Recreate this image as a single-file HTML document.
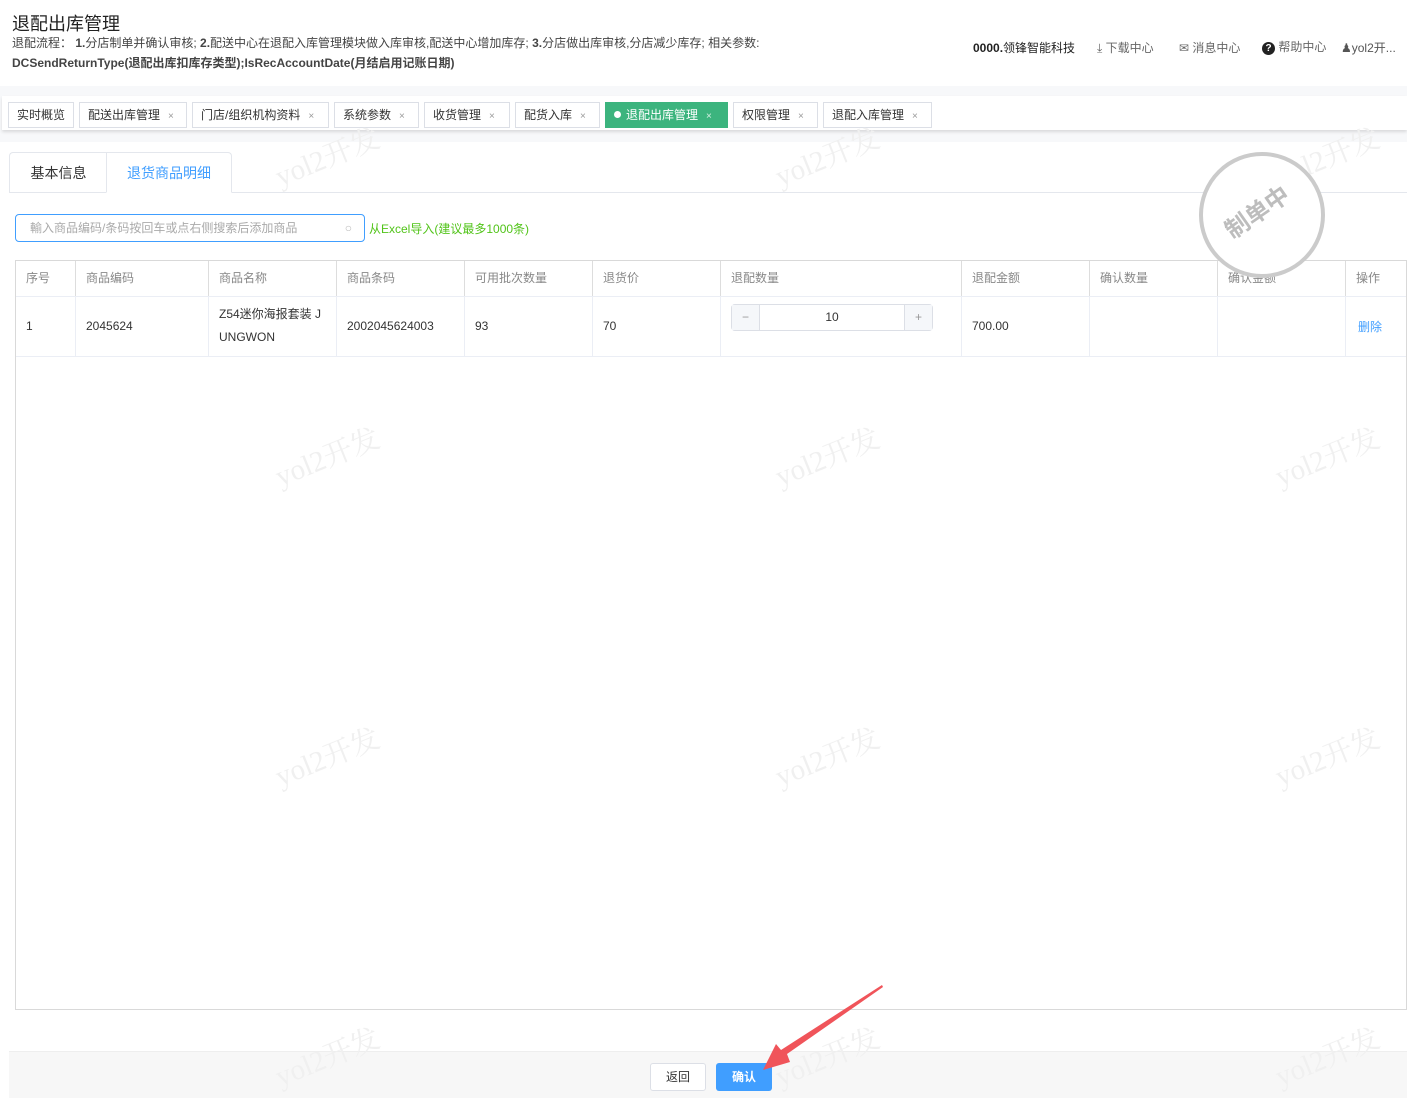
<!DOCTYPE html>
<html><head><meta charset="utf-8"><style>
*{box-sizing:border-box;margin:0;padding:0}
body{width:1407px;height:1098px;position:relative;overflow:hidden;background:#fff;font-family:"Liberation Sans","Noto Sans CJK SC",sans-serif;color:#333}
.abs{position:absolute}
.wm{position:absolute;font-family:"Liberation Serif","Noto Serif CJK SC",serif;font-size:29px;color:#f0f0f0;transform:rotate(-22deg);white-space:nowrap;z-index:5;pointer-events:none}
.tab{position:absolute;top:102px;height:26px;border:1px solid #dcdfe6;background:#fff;font-size:12px;line-height:24px;padding-left:8px;color:#333;white-space:nowrap}
.tab i{font-style:normal;color:#999;font-size:10px;margin-left:8px}
.th,.td{position:absolute;font-size:12px;padding-left:10px}
.th{color:#888;top:261px;height:35px;line-height:35px;border-left:1px solid #ddd}
.td{top:297px;height:59px;line-height:59px;border-left:1px solid #ebeef5;color:#333}
</style></head><body>
<div class="abs" style="left:12px;top:10px;font-size:18px;color:#222">退配出库管理</div>
<div class="abs" style="left:12px;top:33px;font-size:12px;line-height:20px;color:#444">退配流程： <b>1.</b>分店制单并确认审核; <b>2.</b>配送中心在退配入库管理模块做入库审核,配送中心增加库存; <b>3.</b>分店做出库审核,分店减少库存; 相关参数:<br><b>DCSendReturnType(退配出库扣库存类型);IsRecAccountDate(月结启用记账日期)</b></div>
<div class="abs" style="left:973px;top:39px;font-size:12px;color:#222;white-space:nowrap"><b>0000.</b>领锋智能科技</div>
<div class="abs" style="left:1097px;top:39px;font-size:12px;color:#666;white-space:nowrap">⤓ 下载中心</div>
<div class="abs" style="left:1179px;top:39px;font-size:12px;color:#666;white-space:nowrap">✉ 消息中心</div>
<div class="abs" style="left:1262px;top:38px;font-size:12px;color:#666;white-space:nowrap"><span style="display:inline-block;width:13px;height:13px;border-radius:50%;background:#222;color:#fff;font-size:10px;line-height:13px;text-align:center;font-weight:bold">?</span> 帮助中心</div>
<div class="abs" style="left:1341px;top:39px;font-size:12px;color:#555;white-space:nowrap">♟yol2开...</div>

<div class="abs" style="left:0;top:86px;width:1407px;height:56px;background:#f7f8fa"></div>
<div class="abs" style="left:2px;top:96px;width:1405px;height:34px;background:#fff;box-shadow:0 2px 3px rgba(0,0,0,.12)"></div>
<div class="tab" style="left:8px;width:66px">实时概览</div>
<div class="tab" style="left:79px;width:108px">配送出库管理<i>×</i></div>
<div class="tab" style="left:192px;width:137px">门店/组织机构资料<i>×</i></div>
<div class="tab" style="left:334px;width:85px">系统参数<i>×</i></div>
<div class="tab" style="left:424px;width:86px">收货管理<i>×</i></div>
<div class="tab" style="left:515px;width:85px">配货入库<i>×</i></div>
<div class="tab" style="left:605px;width:123px;background:#3cb47e;border-color:#3cb47e;color:#fff"><span style="display:inline-block;width:7px;height:7px;border-radius:50%;background:#fff;margin-right:5px;vertical-align:1px"></span>退配出库管理<i style="color:#d5f0e3">×</i></div>
<div class="tab" style="left:733px;width:85px">权限管理<i>×</i></div>
<div class="tab" style="left:823px;width:109px">退配入库管理<i>×</i></div>

<div class="abs" style="left:9px;top:192px;width:1398px;height:1px;background:#e4e7ed"></div>
<div class="abs" style="left:9px;top:152px;width:98px;height:41px;border:1px solid #e4e7ed;border-right:none;background:#fff;font-size:14px;line-height:40px;text-align:center;color:#333;border-radius:4px 0 0 0">基本信息</div>
<div class="abs" style="left:106px;top:152px;width:126px;height:41px;border:1px solid #e4e7ed;border-bottom:1px solid #fff;background:#fff;font-size:14px;line-height:40px;text-align:center;color:#409eff;border-radius:0 4px 0 0">退货商品明细</div>

<div class="abs" style="left:15px;top:214px;width:350px;height:28px;border:1px solid #409eff;border-radius:4px;font-size:12px;line-height:26px;padding-left:14px;color:#aaa">輸入商品编码/条码按回车或点右侧搜索后添加商品<span style="position:absolute;right:12px;top:0;color:#bbb">○</span></div>
<div class="abs" style="left:369px;top:220px;font-size:12px;color:#52c41a">从Excel导入(建议最多1000条)</div>

<div class="abs" style="left:15px;top:260px;width:1392px;height:750px;border:1px solid #d9d9d9"></div>
<div class="abs" style="left:16px;top:296px;width:1390px;height:1px;background:#ebeef5"></div>
<div class="abs" style="left:16px;top:356px;width:1390px;height:1px;background:#ebeef5"></div>
<div class="th" style="left:16px;width:59px;border-left:none">序号</div>
<div class="th" style="left:75px;width:133px">商品编码</div>
<div class="th" style="left:208px;width:128px">商品名称</div>
<div class="th" style="left:336px;width:128px">商品条码</div>
<div class="th" style="left:464px;width:128px">可用批次数量</div>
<div class="th" style="left:592px;width:128px">退货价</div>
<div class="th" style="left:720px;width:241px">退配数量</div>
<div class="th" style="left:961px;width:128px">退配金额</div>
<div class="th" style="left:1089px;width:128px">确认数量</div>
<div class="th" style="left:1217px;width:128px">确认金额</div>
<div class="th" style="left:1345px;width:61px">操作</div>
<div class="td" style="left:16px;width:59px;border-left:none">1</div>
<div class="td" style="left:75px;width:133px">2045624</div>
<div class="td" style="left:208px;width:128px;line-height:23px;padding-top:6px">Z54迷你海报套装 J<br>UNGWON</div>
<div class="td" style="left:336px;width:128px">2002045624003</div>
<div class="td" style="left:464px;width:128px">93</div>
<div class="td" style="left:592px;width:128px">70</div>
<div class="td" style="left:720px;width:241px"></div>
<div class="td" style="left:961px;width:128px">700.00</div>
<div class="td" style="left:1089px;width:128px"></div>
<div class="td" style="left:1217px;width:128px"></div>
<div class="td" style="left:1345px;width:61px;color:#409eff;padding-left:12px;line-height:61px">删除</div>
<div class="abs" style="left:731px;top:304px;width:202px;height:27px;border:1px solid #dcdfe6;border-radius:4px;background:#fff;font-size:12px">
 <div class="abs" style="left:0;top:0;width:28px;height:25px;background:#f5f7fa;border-right:1px solid #dcdfe6;text-align:center;line-height:25px;color:#999">−</div>
 <div class="abs" style="left:28px;top:0;width:144px;height:25px;text-align:center;line-height:25px;color:#333">10</div>
 <div class="abs" style="right:0;top:0;width:28px;height:25px;background:#f5f7fa;border-left:1px solid #dcdfe6;text-align:center;line-height:25px;color:#999">+</div>
</div>

<div class="abs" style="left:1199px;top:152px;width:126px;height:126px;border:4px solid #cbcbcb;border-radius:50%;background:#fff;z-index:6"></div>
<div class="abs" style="left:1220px;top:193px;font-size:24px;font-weight:bold;color:#bdbdbd;transform:rotate(-35deg);z-index:7;white-space:nowrap">制单中</div>

<div class="abs" style="left:9px;top:1051px;width:1398px;height:47px;background:#f7f7f7;border-top:1px solid #eee"></div>
<div class="abs" style="left:650px;top:1063px;width:56px;height:28px;border:1px solid #dcdfe6;border-radius:3px;background:#fff;font-size:12px;line-height:26px;text-align:center;color:#333">返回</div>
<div class="abs" style="left:716px;top:1063px;width:56px;height:28px;border-radius:3px;background:#409eff;font-size:12px;line-height:28px;text-align:center;color:#fff;font-weight:bold">确认</div>

<svg class="abs" style="left:0;top:0;z-index:8" width="1407" height="1098"><polygon points="882,985 883,987 787,1054 790,1062 763,1070 776,1044 781,1050" fill="#f0545a"/></svg>

<div class="wm" style="left:272px;top:135px">yol2开发</div>
<div class="wm" style="left:772px;top:135px">yol2开发</div>
<div class="wm" style="left:1272px;top:135px">yol2开发</div>
<div class="wm" style="left:272px;top:435px">yol2开发</div>
<div class="wm" style="left:772px;top:435px">yol2开发</div>
<div class="wm" style="left:1272px;top:435px">yol2开发</div>
<div class="wm" style="left:272px;top:735px">yol2开发</div>
<div class="wm" style="left:772px;top:735px">yol2开发</div>
<div class="wm" style="left:1272px;top:735px">yol2开发</div>
<div class="wm" style="left:272px;top:1035px">yol2开发</div>
<div class="wm" style="left:772px;top:1035px">yol2开发</div>
<div class="wm" style="left:1272px;top:1035px">yol2开发</div>
</body></html>
